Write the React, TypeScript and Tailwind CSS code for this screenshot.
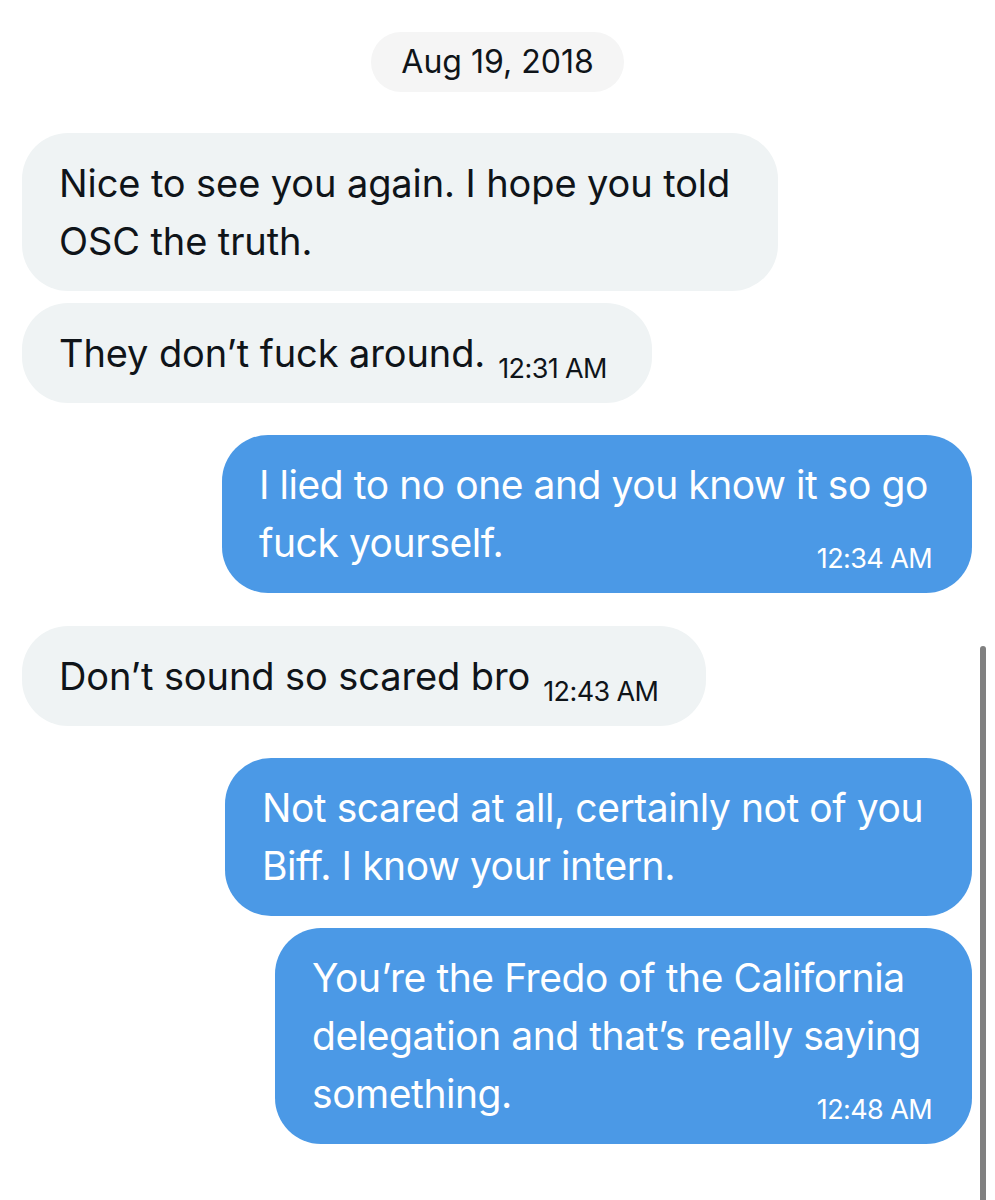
type Msg = {
  side: 'left' | 'right';
  width: string;
  lines: string[];
  time?: string;
  gap: string;
};

const messages: Msg[] = [
  {
    side: 'left',
    width: 'w-[756px]',
    lines: ['Nice to see you again. I hope you told', 'OSC the truth.'],
    gap: 'mt-[41px]',
  },
  {
    side: 'left',
    width: 'w-[630px]',
    lines: ['They don’t fuck around.'],
    time: '12:31 AM',
    gap: 'mt-[12px]',
  },
  {
    side: 'right',
    width: 'w-[750px]',
    lines: ['I lied to no one and you know it so go', 'fuck yourself.'],
    time: '12:34 AM',
    gap: 'mt-[32px]',
  },
  {
    side: 'left',
    width: 'w-[684px]',
    lines: ['Don’t sound so scared bro'],
    time: '12:43 AM',
    gap: 'mt-[33px]',
  },
  {
    side: 'right',
    width: 'w-[747px]',
    lines: ['Not scared at all, certainly not of you', 'Biff. I know your intern.'],
    gap: 'mt-[32px]',
  },
  {
    side: 'right',
    width: 'w-[697px]',
    lines: ['You’re the Fredo of the California', 'delegation and that’s really saying', 'something.'],
    time: '12:48 AM',
    gap: 'mt-[12px]',
  },
];

function Bubble({ msg }: { msg: Msg }) {
  const isLeft = msg.side === 'left';
  const last = msg.lines.length - 1;
  return (
    <div className={`flex ${isLeft ? 'justify-start pl-[22px]' : 'justify-end pr-[23px]'} ${msg.gap}`}>
      <div
        className={`${msg.width} rounded-[46px] py-[21px] pl-[37px] pr-[40px] leading-[58px] ${
          isLeft
            ? 'bg-[#eff3f4] text-[#0f1419] text-[38px] tracking-[-0.1px]'
            : 'bg-[#4b99e6] text-white text-[39px] tracking-[-0.45px]'
        }`}
      >
        {msg.lines.map((line, i) =>
          i === last && msg.time ? (
            <div key={i} className={`flex items-baseline ${isLeft ? 'gap-[13px]' : 'justify-between'}`}>
              <span>{line}</span>
              <span className="relative top-[11px] text-[27px] leading-none tracking-[-0.6px]">{msg.time}</span>
            </div>
          ) : (
            <div key={i}>{line}</div>
          )
        )}
      </div>
    </div>
  );
}

export default function App() {
  return (
    <div className="relative h-[1200px] w-[995px] overflow-hidden bg-white font-['Inter',sans-serif]">
      <div className="flex justify-center pt-[32px]">
        <div className="rounded-full bg-[#f5f5f5] px-[30px] h-[60px] flex items-center text-[32px] text-[#0f1419]">
          Aug 19, 2018
        </div>
      </div>

      {messages.map((m, i) => (
        <Bubble key={i} msg={m} />
      ))}

      {/* scroll indicator */}
      <div className="absolute left-[980px] top-[646px] h-[560px] w-[6px] rounded-full bg-[#808080]" />
    </div>
  );
}
